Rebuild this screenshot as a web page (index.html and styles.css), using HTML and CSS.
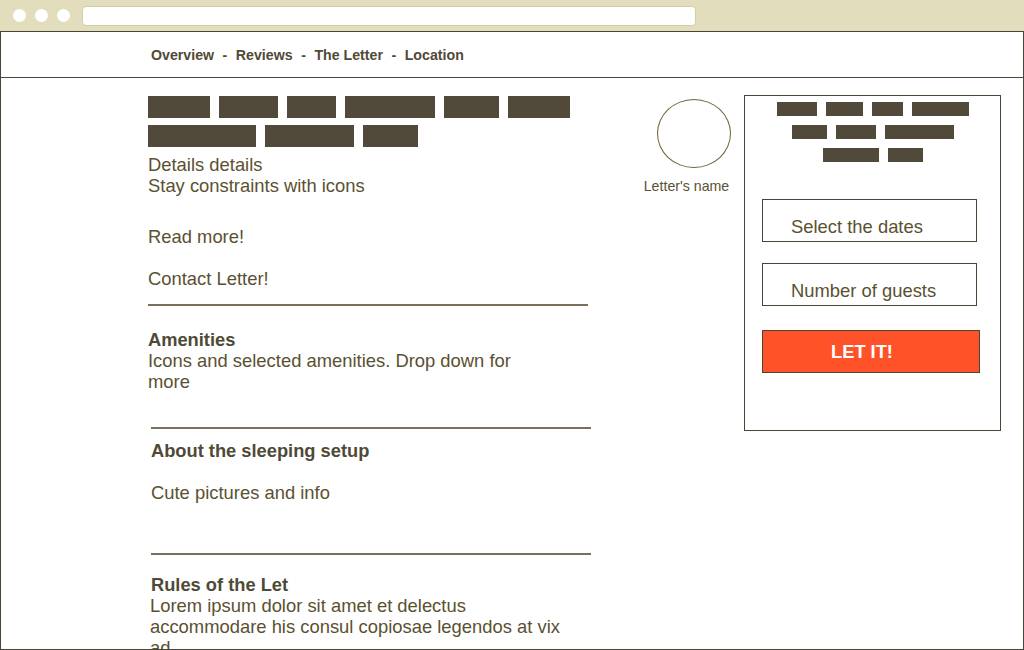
FILE: index.html
```html
<!DOCTYPE html>
<html>
<head>
<meta charset="utf-8">
<link rel="stylesheet" href="styles.css">
</head>
<body>
<div class="browser">
  <div class="chrome">
    <div class="dots"><span class="dot"></span><span class="dot"></span><span class="dot"></span></div>
    <div class="address"></div>
  </div>
  <div class="frame">
    <nav class="nav">
      <span>Overview</span><span class="sep">-</span><span>Reviews</span><span class="sep">-</span><span>The Letter</span><span class="sep">-</span><span>Location</span>
    </nav>
    <div class="main">
      <div class="left">
        <div class="blocks">
          <span class="blk" style="width:62px"></span>
          <span class="blk" style="width:59px"></span>
          <span class="blk" style="width:49px"></span>
          <span class="blk" style="width:90px"></span>
          <span class="blk" style="width:55px"></span>
          <span class="blk" style="width:62px"></span>
          <span class="blk" style="width:108px"></span>
          <span class="blk" style="width:89px"></span>
          <span class="blk" style="width:55px"></span>
        </div>
        <p class="txt details">Details details<br>Stay constraints with icons</p>
        <p class="txt read">Read more!</p>
        <p class="txt contact">Contact Letter!</p>
        <hr class="rule first">
        <section class="sec amen">
          <h3 class="head">Amenities</h3>
          <p class="txt amen-txt">Icons and selected amenities. Drop down for more</p>
        </section>
        <hr class="rule second">
        <section class="sec sleep">
          <h3 class="head">About the sleeping setup</h3>
          <p class="txt cute">Cute pictures and info</p>
        </section>
        <hr class="rule third">
        <section class="sec rules">
          <h3 class="head">Rules of the Let</h3>
          <p class="txt lorem">Lorem ipsum dolor sit amet et delectus accommodare his consul copiosae legendos at vix ad</p>
        </section>
      </div>
      <div class="host">
        <div class="avatar"></div>
        <div class="host-name">Letter's name</div>
      </div>
      <aside class="panel">
        <div class="pblocks">
          <div class="prow">
            <span class="pblk" style="width:40px"></span>
            <span class="pblk" style="width:37px"></span>
            <span class="pblk" style="width:31px"></span>
            <span class="pblk" style="width:57px"></span>
          </div>
          <div class="prow">
            <span class="pblk" style="width:35px"></span>
            <span class="pblk" style="width:40px"></span>
            <span class="pblk" style="width:69px"></span>
          </div>
          <div class="prow">
            <span class="pblk" style="width:56px"></span>
            <span class="pblk" style="width:35px"></span>
          </div>
        </div>
        <div class="field dates">Select the dates</div>
        <div class="field guests">Number of guests</div>
        <div class="btn">LET IT!</div>
      </aside>
    </div>
  </div>
</div>
</body>
</html>
```
FILE: styles.css
```css
* { box-sizing: border-box; }
html, body { margin: 0; padding: 0; background: #fff; }
body { font-family: "Liberation Sans", Arial, sans-serif; color: #5a5131; }

.browser { width: 1024px; height: 650px; overflow: hidden; display: flex; flex-direction: column; }

.chrome { height: 31px; background: #e2ddbd; display: flex; align-items: center; padding-left: 13px; flex-shrink: 0; }
.dots { display: flex; gap: 9px; }
.dot { width: 13px; height: 13px; border-radius: 50%; background: #fff; display: block; }
.address { margin-left: 12px; width: 614px; height: 20px; background: #fff; border-radius: 4px; border: 1px solid #d3cda4; }

.frame { flex: 1; border: 1px solid #4a4637; overflow: hidden; display: flex; flex-direction: column; }

.nav { height: 46px; border-bottom: 1px solid #4a4637; padding-left: 150px; display: flex; align-items: center; font-size: 14.2px; font-weight: bold; color: #4f4a36; flex-shrink: 0; padding-top: 1px; }
.sep { margin: 0 8.5px; }

.main { display: flex; align-items: flex-start; padding-left: 147px; padding-top: 18px; }

.left { width: 440px; flex-shrink: 0; }
.blocks { display: flex; flex-wrap: wrap; column-gap: 9px; row-gap: 7px; }
.blk { display: block; height: 22px; background: #514a3a; }

.txt { margin: 0; font-size: 18.4px; line-height: 21px; }
.details { margin-top: 7px; }
.read { margin-top: 30px; }
.contact { margin-top: 21px; }

.rule { border: 0; height: 2px; background: #7a705c; margin: 0; width: 440px; }
.rule.first { margin-top: 15px; }
.rule.second { margin-top: 35px; margin-left: 3px; }
.rule.third { margin-top: 50px; margin-left: 3px; }

.sec { padding-left: 3px; }
.amen { padding-left: 0; margin-top: 23px; }
.amen-txt { width: 390px; }
.head { margin: 0; font-size: 18.3px; line-height: 21px; font-weight: bold; color: #4f4a36; }
.sleep { margin-top: 11px; }
.cute { margin-top: 21px; }
.rules { margin-top: 19px; }
.lorem { width: 420px; margin-left: -1px; }

.host { margin-left: 55px; width: 87px; display: flex; flex-direction: column; align-items: center; padding-top: 3px; flex-shrink: 0; }
.avatar { width: 74px; height: 69px; border: 1px solid #6f6334; border-radius: 50%; margin-left: 14px; }
.host-name { margin-top: 10px; font-size: 14.2px; line-height: 16px; white-space: nowrap; }

.panel { margin-left: 14px; width: 257px; height: 336px; border: 1px solid #4a4637; flex-shrink: 0; margin-top: -1px; padding: 6px 0 0 17px; }
.pblocks { display: flex; flex-direction: column; align-items: center; gap: 9px; width: 221px; }
.prow { display: flex; gap: 9px; }
.pblk { display: block; height: 14px; background: #514a3a; }

.field { width: 215px; height: 43px; border: 1px solid #4a4637; font-size: 18.4px; line-height: 21px; padding: 16px 0 0 28px; }
.dates { margin-top: 37px; }
.guests { margin-top: 21px; }
.btn { margin-top: 24px; width: 218px; height: 43px; background: #ff5228; border: 1px solid #4a4637; color: #fff; font-weight: bold; font-size: 18.3px; display: flex; align-items: center; justify-content: center; padding-right: 18px; padding-top: 1px; }
```
